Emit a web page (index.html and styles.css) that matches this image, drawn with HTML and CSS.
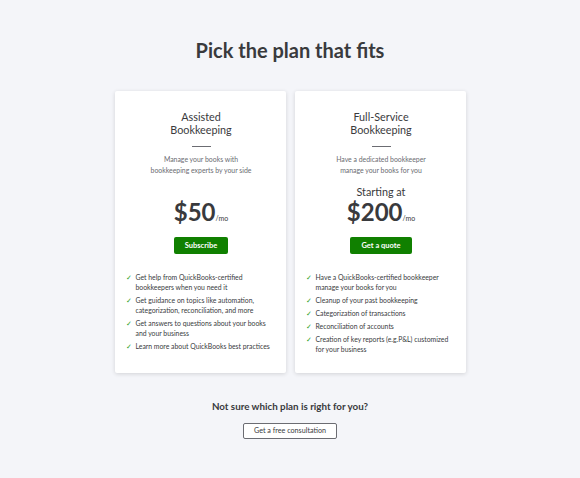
FILE: index.html
```html
<!DOCTYPE html>
<html>
<head>
    <title>Bookkeeping Plans</title>
    <meta charset="UTF-8">
    <link rel="stylesheet" href="styles.css">
</head>
<body>

<h1 class="page-title">Pick the plan that fits</h1>

<div class="plans">
    <div class="card">
        <div class="card-title">Assisted<br>Bookkeeping</div>
        <div class="divider"></div>
        <div class="card-desc">Manage your books with<br>bookkeeping experts by your side</div>
        <div class="price-box">
            <div class="price">$50<span class="per">/mo</span></div>
        </div>
        <div class="action"><span class="btn-green">Subscribe</span></div>
        <ul class="features">
            <li>Get help from QuickBooks-certified bookkeepers when you need it</li>
            <li>Get guidance on topics like automation, categorization, reconciliation, and more</li>
            <li>Get answers to questions about your books and your business</li>
            <li>Learn more about QuickBooks best practices</li>
        </ul>
    </div>

    <div class="card">
        <div class="card-title">Full-Service<br>Bookkeeping</div>
        <div class="divider"></div>
        <div class="card-desc">Have a dedicated bookkeeper<br>manage your books for you</div>
        <div class="price-box">
            <div class="starting">Starting at</div>
            <div class="price">$200<span class="per">/mo</span></div>
        </div>
        <div class="action"><span class="btn-green">Get a quote</span></div>
        <ul class="features">
            <li>Have a QuickBooks-certified bookkeeper manage your books for you</li>
            <li>Cleanup of your past bookkeeping</li>
            <li>Categorization of transactions</li>
            <li>Reconciliation of accounts</li>
            <li>Creation of key reports (e.g.P&amp;L) customized for your business</li>
        </ul>
    </div>
</div>

<div class="help">
    <div class="help-text">Not sure which plan is right for you?</div>
    <span class="btn-outline">Get a free consultation</span>
</div>

</body>
</html>
```

FILE: styles.css
```css
body{
    margin: 0;
    background-color: #f4f5f9;
    font-family: Lato, "Open Sans", sans-serif;
    color: #393a3d;
}

.page-title{
    margin: 0;
    padding-top: 37px;
    text-align: center;
    font-size: 20px;
    line-height: 26px;
    font-weight: 700;
}

.plans{
    display: flex;
    justify-content: center;
    gap: 9px;
    margin-top: 28px;
}

.card{
    width: 171px;
    height: 282px;
    box-sizing: border-box;
    padding: 19px 10px 0 12px;
    background-color: #ffffff;
    border-radius: 2px;
    box-shadow: 0 1px 4px rgba(0, 0, 0, 0.14);
}

.card-title{
    text-align: center;
    font-size: 10.8px;
    line-height: 13px;
}

.divider{
    width: 19px;
    height: 1px;
    margin: 10px auto 0;
    background-color: #6b6c72;
}

.card-desc{
    margin-top: 7px;
    text-align: center;
    font-size: 6.9px;
    line-height: 11px;
    color: #6b6c72;
}

.price-box{
    height: 56px;
    display: flex;
    flex-direction: column;
    justify-content: flex-end;
    align-items: center;
}

.starting{
    font-size: 10.8px;
    line-height: 13px;
}

.price{
    font-size: 24px;
    line-height: 28px;
    font-weight: 700;
}

.per{
    font-size: 7px;
    font-weight: 400;
}

.action{
    display: flex;
    justify-content: center;
    margin-top: 5px;
}

.btn-green{
    padding: 0 11px;
    height: 17px;
    line-height: 17px;
    background-color: #108000;
    color: #ffffff;
    font-size: 7.5px;
    font-weight: 700;
    border-radius: 2px;
}

.features{
    list-style: none;
    margin: 18px 0 0;
    padding: 0;
}

.features li{
    position: relative;
    padding-left: 9px;
    margin-bottom: 3px;
    font-size: 6.85px;
    line-height: 10px;
}

.features li::before{
    content: "\2713";
    position: absolute;
    left: -1px;
    top: 0;
    color: #2ca01c;
    font-size: 7px;
}

.help{
    margin-top: 27px;
    text-align: center;
}

.help-text{
    font-size: 9.8px;
    line-height: 13px;
    font-weight: 700;
}

.btn-outline{
    display: inline-block;
    margin-top: 10px;
    width: 94px;
    height: 16px;
    box-sizing: border-box;
    line-height: 14px;
    border: 1px solid #6b6c72;
    border-radius: 2px;
    background-color: #ffffff;
    font-size: 7.2px;
}
```
